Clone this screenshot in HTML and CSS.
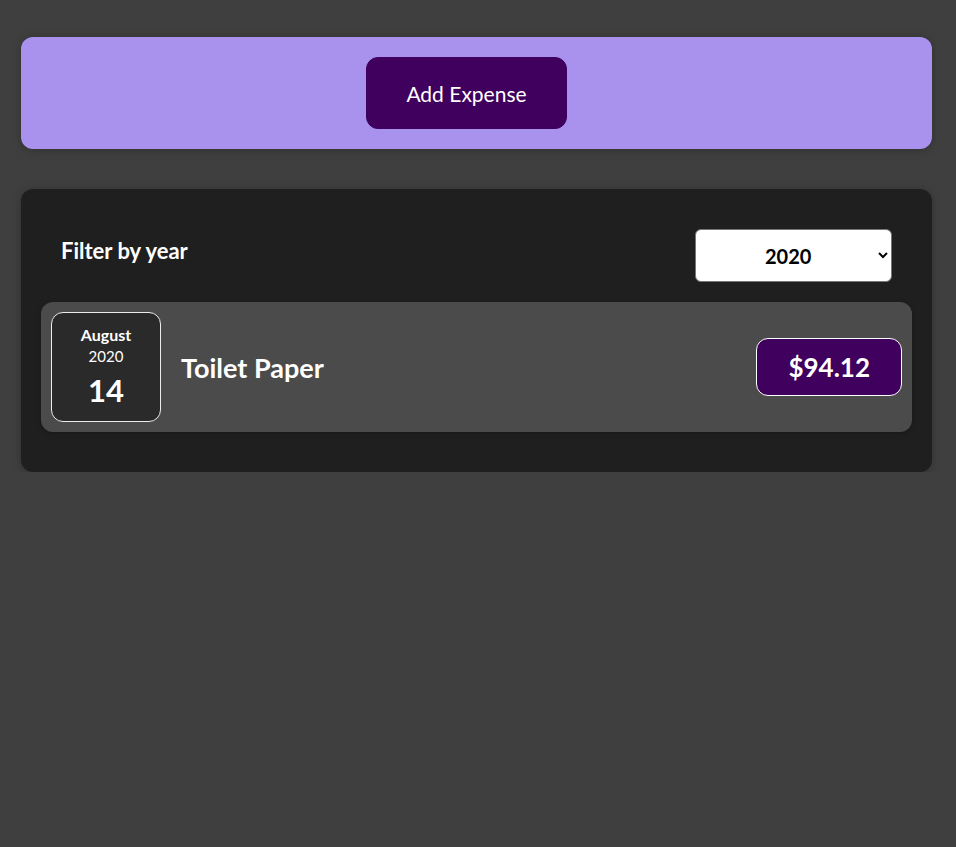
FILE: index.html
```html
<!DOCTYPE html>
<html lang="en">
<head>
    <meta charset="UTF-8">
    <meta name="viewport" content="width=device-width, initial-scale=1.0">
    <title>Expenses</title>
    <link rel="stylesheet" href="styles.css">
</head>
<body>
    <div class="new-expense card">
        <button class="add-btn">Add Expense</button>
    </div>

    <div class="expenses card">
        <div class="expenses-filter">
            <div class="expenses-filter__control">
                <label for="year">Filter by year</label>
                <select id="year">
                    <option>2022</option>
                    <option>2021</option>
                    <option selected>2020</option>
                    <option>2019</option>
                </select>
            </div>
        </div>

        <div class="expense-item">
            <div class="expense-item__description">
                <div class="expense-date">
                    <div class="expense-date__month">August</div>
                    <div class="expense-date__year">2020</div>
                    <div class="expense-date__day">14</div>
                </div>
                <h2>Toilet Paper</h2>
            </div>
            <div class="expense-item__price">$94.12</div>
        </div>
    </div>
</body>
</html>
```

FILE: styles.css
```css
body {
    margin: 0;
    padding-top: 37px;
    background-color: #3f3f3f;
    font-family: Lato, "Open Sans", sans-serif;
}
.card {
    border-radius: 12px;
    box-shadow: 0 1px 8px rgba(0, 0, 0, 0.25);
}
.new-expense {
    background-color: #a892ee;
    padding: 20px;
    margin: 0 0 40px 21px;
    width: 871px;
    text-align: center;
}
.add-btn {
    font: inherit;
    font-size: 21px;
    cursor: pointer;
    width: 201px;
    height: 72px;
    border: 1px solid #40005d;
    background-color: #40005d;
    color: white;
    border-radius: 12px;
    margin-right: 20px;
}
.expenses {
    padding: 20px;
    background-color: #1f1f1f;
    margin-left: 21px;
    width: 871px;
}
.expenses-filter {
    color: white;
    padding: 0 20px;
}
.expenses-filter__control {
    display: flex;
    align-items: center;
    justify-content: space-between;
    margin: 20px 0;
}
.expenses-filter label {
    font-weight: bold;
    font-size: 22px;
    margin-bottom: 10px;
}
.expenses-filter select {
    font: inherit;
    font-size: 20px;
    font-weight: bold;
    width: 197px;
    height: 53px;
    padding: 0 50px 0 65px;
    border-radius: 6px;
    border: 1px solid #767676;
    background-color: #fff;
    color: #000;
}
.expense-item {
    display: flex;
    justify-content: space-between;
    align-items: center;
    box-shadow: 0 1px 4px rgba(0, 0, 0, 0.25);
    padding: 10px;
    margin-bottom: 20px;
    border-radius: 12px;
    background-color: #4b4b4b;
}
.expense-item__description {
    display: flex;
    align-items: center;
    gap: 20px;
    flex: 1;
}
.expense-item h2 {
    font-size: 27px;
    margin: 0;
    color: white;
}
.expense-item__price {
    font-size: 26px;
    font-weight: bold;
    line-height: 36px;
    color: white;
    background-color: #40005d;
    border: 1px solid white;
    padding: 10px 31px;
    border-radius: 12px;
}
.expense-date {
    display: flex;
    flex-direction: column;
    width: 108px;
    height: 108px;
    border: 1px solid #ececec;
    background-color: #2a2a2a;
    color: white;
    border-radius: 12px;
    align-items: center;
    justify-content: center;
}
.expense-date__month {
    font-size: 16px;
    font-weight: bold;
    line-height: 20px;
}
.expense-date__year {
    font-size: 15px;
    line-height: 22px;
}
.expense-date__day {
    font-size: 31px;
    font-weight: bold;
    line-height: 40px;
    margin-top: 3px;
}
```
